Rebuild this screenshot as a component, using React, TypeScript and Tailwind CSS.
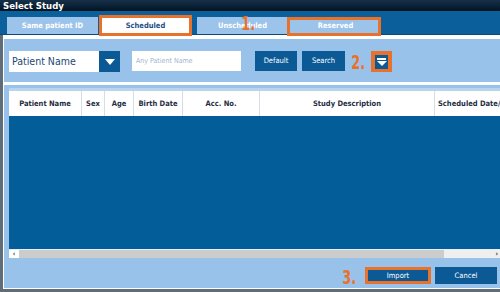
import * as React from "react";

const font = { fontFamily: '"DejaVu Sans Condensed", "DejaVu Sans", sans-serif' };

const columns = [
  { label: "Patient Name", w: "w-[73px]" },
  { label: "Sex", w: "w-[23px]" },
  { label: "Age", w: "w-[29px]" },
  { label: "Birth Date", w: "w-[49px]" },
  { label: "Acc. No.", w: "w-[77px]" },
  { label: "Study Description", w: "w-[175px]" },
  { label: "Scheduled Date/", w: "flex-1" },
];

const Tab = ({ label, active }: { label: string; active?: boolean }) => (
  <div
    className={
      "w-[91px] h-[17px] flex items-center justify-center text-[7.5px] font-bold " +
      (active ? "bg-white text-[#1d4f86]" : "bg-[#9cc3e9] text-white")
    }
  >
    {label}
  </div>
);

const Mark = ({ n, className }: { n: string; className: string }) => (
  <span
    className={"absolute text-[#e8722c] font-bold text-[19px] leading-none scale-x-75 " + className}
    style={font}
  >
    {n}
  </span>
);

export default function App() {
  return (
    <div className="w-[500px] h-[292px] overflow-hidden relative bg-[#5f6d79] flex flex-col" style={font}>
      {/* title bar */}
      <div className="h-[11px] shrink-0 bg-gradient-to-b from-[#16314a] to-[#041423] text-white text-[9.5px] font-bold leading-[11px] pl-[3px]">
        Select Study
      </div>

      {/* tabs */}
      <div className="h-[24px] shrink-0 bg-[#0b5f9b] border-b border-[#0a4a78] flex items-end pl-[7px] gap-[2px]">
        <Tab label="Same patient ID" />
        <Tab label="Scheduled" active />
        <div className="w-[2px]" />
        <Tab label="Unscheduled" />
        <Tab label="Reserved" />
      </div>

      <div className="flex-1 flex flex-col ml-[3px] bg-white pl-[1px] pt-[4px] pb-[1px] mb-[3px]">
        {/* search panel */}
        <div className="h-[43px] shrink-0 bg-[#99c2ea] flex items-start pt-[12px] pl-[5px]">
          <div className="flex h-[21px] w-[111px] bg-white">
            <div className="flex-1 flex items-center pl-[3px] text-[10.5px] text-[#1d4673]">Patient Name</div>
            <div className="w-[21px] bg-[#0b5a96] flex items-center justify-center">
              <div className="w-0 h-0 border-l-[5px] border-r-[5px] border-t-[6px] border-l-transparent border-r-transparent border-t-white" />
            </div>
          </div>
          <div className="ml-[12px] w-[109px] h-[20px] bg-white flex items-center pl-[4px] text-[7px] text-[#9fb6d0]">
            Any Patient Name
          </div>
          <button className="ml-[14px] w-[42px] h-[20px] bg-[#0b5a96] text-white text-[7.5px]">Default</button>
          <button className="ml-[5px] w-[43px] h-[20px] bg-[#0b5a96] text-white text-[7.5px]">Search</button>
          <div className="ml-[26px] w-[21px] h-[21px] bg-[#e8722c] flex items-center justify-center">
            <div className="w-[13px] h-[14px] bg-[#0b5a96] flex flex-col items-center pt-[3px] gap-[1px]">
              <div className="w-[9px] h-[2px] bg-white" />
              <div className="w-0 h-0 border-l-[5px] border-r-[5px] border-t-[5px] border-l-transparent border-r-transparent border-t-white" />
            </div>
          </div>
        </div>

        <div className="h-[3px] shrink-0" />

        {/* table panel */}
        <div className="flex-1 bg-[#99c2ea] flex flex-col pl-[5px] pt-[3px]">
          <div className="border-t-[3px] border-[#b8d4ef]" />
          <div className="h-[25px] shrink-0 bg-white flex">
            {columns.map((c, i) => (
              <div
                key={i}
                className={
                  c.w +
                  " shrink-0 flex items-center text-[7.5px] font-bold text-[#1f2d44] whitespace-nowrap overflow-hidden " +
                  (i === columns.length - 1 ? "pl-[3px]" : "justify-center border-r border-[#d5dde6]")
                }
              >
                {c.label}
              </div>
            ))}
          </div>
          <div className="h-[133px] shrink-0 bg-[#025d99]" />
          <div className="h-[9px] shrink-0 flex bg-[#cccccc] border-t border-[#e6eef6]">
            <div className="w-[10px] bg-white flex items-center justify-center text-[7px] font-bold text-[#333] leading-none">‹</div>
            <div className="flex-1" />
            <div className="w-[56px] bg-[#efefef] flex items-center justify-end pr-[2px] text-[7px] font-bold text-[#333] leading-none">›</div>
          </div>
          <div className="flex-1 flex justify-end items-start pt-[9px] pr-[3px]">
            <div className="flex border-[3px] border-[#e8722c] mr-[4px]">
              <button className="w-[60px] h-[11px] bg-[#0b5a96] text-white text-[7.5px] leading-none">Import</button>
            </div>
            <button className="w-[62px] h-[17px] bg-[#0b5a96] text-white text-[7.5px]">Cancel</button>
          </div>
        </div>
      </div>

      {/* annotation overlays */}
      <div className="absolute left-[99px] top-[15px] w-[93px] h-[21px] border-[3px] border-[#e8722c]" />
      <div className="absolute left-[287px] top-[17px] w-[94px] h-[19px] border-[3px] border-[#e8722c]" />
      <Mark n="1." className="left-[239px] top-[14px]" />
      <Mark n="2." className="left-[349px] top-[53px]" />
      <Mark n="3." className="left-[340px] top-[268px]" />
    </div>
  );
}
